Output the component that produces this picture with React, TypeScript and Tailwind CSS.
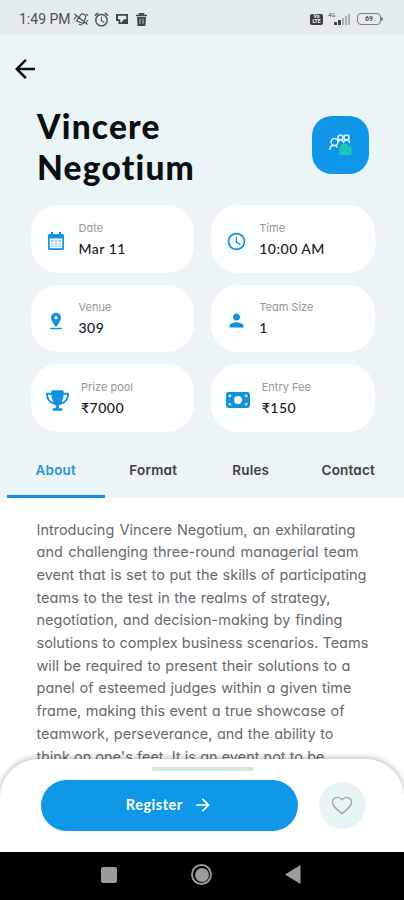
import type { ReactNode } from "react";
import { FaMoneyBill, FaTrophy } from "react-icons/fa6";
import {
  MdAccessTime,
  MdAlarm,
  MdArrowBack,
  MdArrowForward,
  MdPerson,
  MdPinDrop,
} from "react-icons/md";

function CalendarIcon() {
  return (
    <svg width="16" height="18" viewBox="0 0 16 18" fill="currentColor">
      <path fillRule="evenodd" d="M3 0h2v2h6V0h2v2h1.500c.8 0 1.500.700 1.500 1.500v13c0 .8-.7 1.500-1.500 1.500h-13C.7 18 0 17.300 0 16.500v-13C0 2.700.7 2 1.500 2H3zM1.700 6.500v9.800h12.600V6.500z" />
      <path d="M3 8h2.500v2H3zM6.700 8h2.600v2H6.700zM10.500 8H13v2h-2.500zM3 11h2.500v1.500H3zM6.700 11h2.600v1.500H6.700zM10.500 11H13v1.500h-2.500zM3 13.500h2.500V15H3zM6.700 13.500h2.600V15H6.700zM10.500 13.500H13V15h-2.500z" opacity=".45" />
    </svg>
  );
}

const DETAILS = [
  { label: "Date", value: "Mar 11", icon: <CalendarIcon />, wide: false },
  { label: "Time", value: "10:00 AM", icon: <MdAccessTime size={21} />, wide: false },
  { label: "Venue", value: "309", icon: <MdPinDrop size={20} />, wide: false },
  { label: "Team Size", value: "1", icon: <MdPerson size={21} />, wide: false },
  { label: "Prize pool", value: "₹7000", icon: <FaTrophy size={23} />, wide: true },
  { label: "Entry Fee", value: "₹150", icon: <FaMoneyBill size={24} />, wide: true },
];

const TABS = ["About", "Format", "Rules", "Contact"];

const ABOUT_LINES = [
  { text: "Introducing Vincere Negotium, an exhilarating", width: "w-[319px]" },
  { text: "and challenging three-round managerial team", width: "w-[322px]" },
  { text: "event that is set to put the skills of participating", width: "w-[330px]" },
  { text: "teams to the test in the realms of strategy,", width: "w-[294px]" },
  { text: "negotiation, and decision-making by finding", width: "w-[306px]" },
  { text: "solutions to complex business scenarios. Teams", width: "w-[330px]" },
  { text: "will be required to present their solutions to a", width: "w-[314px]" },
  { text: "panel of esteemed judges within a given time", width: "w-[315px]" },
  { text: "frame, making this event a true showcase of", width: "w-[308px]" },
  { text: "teamwork, perseverance, and the ability to", width: "w-[297px]" },
  { text: "think on one's feet. It is an event not to be", width: "w-[288px]" },
];

function StatusBar() {
  return (
    <div className="flex h-[34px] shrink-0 items-center bg-[#e3ebed] pt-1 pr-[21px] pl-[19px] text-[#4b5154]">
      <span className="w-[52px] font-[Roboto] text-[14px] whitespace-nowrap">1:49 PM</span>
      <div className="ml-[2px] flex items-center gap-[4px]">
        <svg width="16" height="16" viewBox="0 0 16 16" fill="none" stroke="currentColor" strokeWidth="1.2">
          <path d="M3.500 10 8 3.500c2-1.800 5.500.5 4.500 3L10.500 12.500zM1.500 3l13 10.500M6 13c.8 1.300 2.500 1 3 0M1 8.500 3 5.500M13 11.500l2-2.500M13 3l2 1.500" />
        </svg>
        <MdAlarm size={17} />
        <svg className="ml-[2px]" width="12" height="12" viewBox="0 0 12 12">
          <path fillRule="evenodd" d="M0 1h12v10H2.500V8H0zM2 2.700v3.500h2.200v3h1.500L8 6.200h2.300V2.700z" fill="#3f4649" />
          <path d="M6.500 8.500h3.500V10H6.500z" fill="#3f4649" />
        </svg>
        <svg className="ml-[4px]" width="11" height="13" viewBox="0 0 11 13">
          <path d="M0 2.500h11M3.500 2V.8h4V2" stroke="#3f4649" strokeWidth="1.600" fill="none" />
          <path d="M1 4h9l-.6 9H1.600z" fill="#3f4649" />
          <path d="M4 5.500v5.500M7 5.500v5.500" stroke="#b4bcbe" strokeWidth="1" />
        </svg>
      </div>
      <div className="ml-auto flex items-center">
        <div className="flex h-[11px] w-[13px] flex-col items-center justify-center rounded-[2px] bg-[#383e41] font-[Roboto] text-[5px] leading-[5px] font-bold text-white">
          <span>Vo</span>
          <span>LTE</span>
        </div>
        <div className="ml-[5px] flex h-[14px] w-[24px] items-end gap-[1px] pb-[1px]">
          <span className="w-[5px] shrink-0 self-start font-[Roboto] text-[6px] leading-[6px]">4G</span>
          <i className="h-[3px] w-[3px] bg-[#383e41]" />
          <i className="h-[5px] w-[3px] bg-[#383e41]" />
          <i className="h-[7px] w-[2px] bg-[#a9b1b3]" />
          <i className="h-[9px] w-[2px] bg-[#a9b1b3]" />
          <i className="h-[11px] w-[2px] bg-[#a9b1b3]" />
        </div>
        <div className="ml-[5px] flex h-[12px] w-[24px] items-center justify-center rounded-[4px] border border-[#777f82] font-[Roboto] text-[7px] font-bold">
          69
        </div>
        <i className="h-[4px] w-[2px] rounded-r bg-[#777f82]" />
      </div>
    </div>
  );
}

function EventBadge() {
  return (
    <div className="mb-[4px] flex h-[58px] w-[57px] items-center justify-center rounded-[20px] bg-[#0f96e8]">
      <svg width="24" height="24" viewBox="0 0 24 24" fill="none" stroke="#d9f1ff" strokeWidth="1.5">
        <circle cx="6.5" cy="9" r="3.4" />
        <path d="M1.8 17c0-3 1.2-4.600 3.500-4.600h2.400l1.800 2" />
        <circle cx="12.5" cy="4.5" r="2.5" />
        <circle cx="18.5" cy="4.5" r="2.5" />
        <path d="M9.5 9.5c.5-1.700 1.500-2.500 3-2.500s2.500.800 3 2c.500-1.200 1.500-2 3-2s2.800.800 3.300 3" />
        <path d="M11.500 13.500h1.500c.5-4 7-4 7.500 0h3v8.500h-12z" fill="#19c9b8" stroke="none" />
        <path d="M15 16.500v2M19.500 16.500v2" stroke="#0fa9c4" strokeWidth="1" />
      </svg>
    </div>
  );
}

type DetailCardProps = {
  label: string;
  value: string;
  icon: ReactNode;
  wide: boolean;
};

function DetailCard({ label, value, icon, wide }: DetailCardProps) {
  return (
    <div className="flex h-[67.500px] items-center rounded-[27px] bg-[#fbfffe]">
      <div
        className={`flex justify-center pt-[5px] text-[#1490e0] ${
          wide ? "ml-[14px] w-[26px]" : "ml-[14.500px] w-[22px]"
        }`}
      >
        {icon}
      </div>
      <div className={`[font-feature-settings:'cv11'] ${wide ? "ml-[10.500px]" : "ml-[11.500px]"}`}>
        <p className="font-[Inter,'Noto_Sans',sans-serif] text-[11px] leading-[20px] text-[#94999a]">{label}</p>
        <p className="text-[14px] leading-[22px] font-medium tracking-[0.500px] text-[#15191a]">{value}</p>
      </div>
    </div>
  );
}

function BottomSheet() {
  return (
    <div className="absolute inset-x-0 bottom-[48px] h-[93px] rounded-t-[38px] bg-white shadow-[0_-1px_5px_1px_rgba(0,0,0,0.22)]">
      <div className="mx-auto mt-[8px] h-[4px] w-[102px] translate-x-[1px] rounded-full bg-[#d6e4e3]" />
      <div className="mt-[8.500px] flex items-center pl-[40.500px]">
        <button className="flex h-[51.500px] w-[257.500px] items-center justify-center rounded-full bg-[#0f97e8] text-white">
          <span className="text-[14.500px] font-bold tracking-[0.500px]">Register</span>
          <MdArrowForward className="ml-[10px]" size={20} />
        </button>
        <button className="ml-[20.500px] flex h-[47px] w-[47px] items-center justify-center rounded-full bg-[#e8f3f4]" aria-label="Save">
          <svg width="22" height="19" viewBox="0 0 23 20" fill="none" stroke="#9ca8aa" strokeWidth="1.500">
            <path d="M11.500 18.500C6 14 1.500 11 1.500 6.500c0-5 6.500-7 10-2.500 3.500-4.500 10-2.500 10 2.500 0 4.500-4.500 7.500-10 12z" />
          </svg>
        </button>
      </div>
    </div>
  );
}

function NavigationBar() {
  return (
    <div className="absolute inset-x-0 bottom-0 flex h-[48px] items-center bg-black pb-[3px]">
      <div className="ml-[101px] h-[16px] w-[16px] rounded-[2px] bg-[#9b9b9b]" />
      <div className="ml-[74px] flex h-[21px] w-[21px] items-center justify-center rounded-full border-2 border-[#9b9b9b]">
        <div className="h-[14px] w-[14px] rounded-full bg-[#9b9b9b]" />
      </div>
      <svg className="ml-[73px]" width="16" height="19" viewBox="0 0 16 19">
        <path d="M0 9.500 15.500 0v19z" fill="#9b9b9b" />
      </svg>
    </div>
  );
}

export default function App() {
  return (
    <div className="relative flex h-[900px] w-[404px] flex-col overflow-hidden bg-white font-[Lato,'Noto_Sans',sans-serif]">
      <StatusBar />
      <header className="h-[463.500px] shrink-0 bg-[#ebf4f6]">
        <button className="mt-[20px] ml-[10px] block text-[#0c0f10]" aria-label="Back">
          <MdArrowBack size={30} />
        </button>
        <div className="mt-[22px] flex items-center justify-between pr-[35.500px] pl-[37px]">
          <h1 className="text-[33.500px] leading-[41px] font-black tracking-[1.200px] text-[#0b0f11]">
            Vincere
            <br />
            Negotium
          </h1>
          <EventBadge />
        </div>
        <div className="mt-[17px] grid grid-cols-2 gap-x-[17px] gap-y-[12px] pr-[29px] pl-[30.500px]">
          {DETAILS.map((item) => (
            <DetailCard key={item.label} {...item} />
          ))}
        </div>
        <nav className="mt-[12px] flex px-[7px]">
          {TABS.map((tab, index) => (
            <button
              key={tab}
              className={`h-[54px] flex-1 border-b-[3.500px] pt-[2px] font-[Inter,sans-serif] text-[13.500px] font-semibold tracking-[0.200px] [font-feature-settings:'cv11'] ${
                index === 0
                  ? "border-[#148fe0] text-[#2b96dc]"
                  : "border-transparent text-[#3b4143]"
              }`}
            >
              {tab}
            </button>
          ))}
        </nav>
      </header>
      <div className="pt-[21px] pl-[36.500px] font-[Inter,sans-serif] text-[14.500px] leading-[22.700px] tracking-[0px] text-[#666b6d] [font-feature-settings:'cv11']">
        {ABOUT_LINES.map(({ text, width }) => (
          <p key={text} className={`whitespace-nowrap [text-align-last:justify] ${width}`}>
            {text}
          </p>
        ))}
      </div>
      <BottomSheet />
      <NavigationBar />
    </div>
  );
}
